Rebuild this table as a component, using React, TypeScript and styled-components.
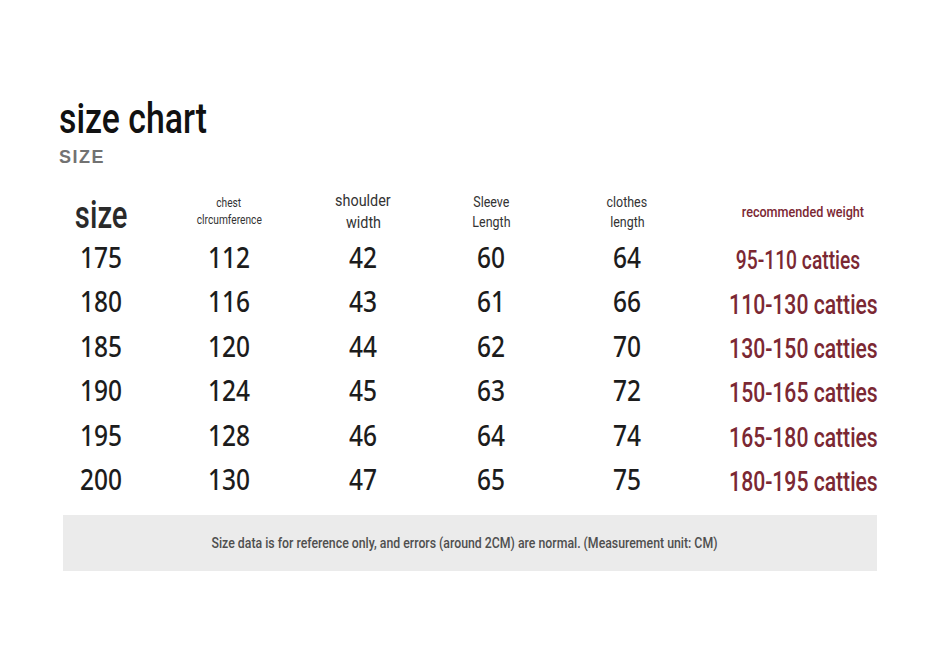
import React from 'react';
import styled, { createGlobalStyle } from 'styled-components';

const Global = createGlobalStyle`
  html, body { margin: 0; padding: 0; background: #ffffff; }
  body { font-family: Roboto, "Noto Sans", sans-serif; }
`;

const Page = styled.div`
  width: 937px;
  height: 656px;
  box-sizing: border-box;
  padding-top: 95px;
  display: flex;
  flex-direction: column;
  background: #ffffff;
`;

const TitleBlock = styled.div`
  margin-left: 59px;
  display: flex;
  flex-direction: column;
`;

const Squeeze = styled.span<{ $x: number; $origin?: string }>`
  display: inline-block;
  white-space: nowrap;
  transform: scaleX(${(p) => p.$x});
  transform-origin: ${(p) => p.$origin || 'center'} center;
`;

const Title = styled.h1`
  margin: 0;
  font-family: Roboto, sans-serif;
  font-size: 42px;
  line-height: 48px;
  font-weight: 500;
  color: #111111;
`;

const Subtitle = styled.div`
  margin-top: 4px;
  font-family: "Liberation Sans", Arial, sans-serif;
  font-size: 18px;
  line-height: 20px;
  font-weight: 700;
  letter-spacing: 1.5px;
  color: #727272;
`;

const Table = styled.div`
  margin-top: 22px;
  margin-left: 37px;
  display: grid;
  grid-template-columns: 128px 128px 140px 116px 156px 196px;
  grid-template-rows: 46px repeat(6, 44.4px);
  align-items: center;
  justify-items: center;
`;

const HeadCell = styled.div<{ $size: number; $lh: number; $pt?: number; $weight?: number; $color?: string }>`
  font-family: Roboto, sans-serif;
  font-size: ${(p) => p.$size}px;
  line-height: ${(p) => p.$lh}px;
  font-weight: ${(p) => p.$weight || 400};
  color: ${(p) => p.$color || '#333333'};
  padding-top: ${(p) => p.$pt || 0}px;
  text-align: center;
`;

const Num = styled.div`
  font-family: "Noto Sans", sans-serif;
  font-size: 28px;
  line-height: 44.4px;
  font-weight: 500;
  color: #1c1c1c;
`;

const Weight = styled.div<{ $size: number; $shift: number }>`
  font-family: Roboto, sans-serif;
  font-size: ${(p) => p.$size}px;
  line-height: 38px;
  padding-top: 6px;
  padding-right: ${(p) => p.$shift}px;
  font-weight: 500;
  color: #7b2833;
`;

const Footer = styled.div`
  margin-top: 14px;
  margin-left: 63px;
  width: 814px;
  height: 56px;
  box-sizing: border-box;
  padding-right: 11px;
  background: #ebebeb;
  display: flex;
  align-items: center;
  justify-content: center;
  font-family: Roboto, sans-serif;
  font-size: 15px;
  font-weight: 500;
  color: #4f4f4f;
`;

const rows: Array<[string, string, string, string, string, string]> = [
  ['175', '112', '42', '60', '64', '95-110 catties'],
  ['180', '116', '43', '61', '66', '110-130 catties'],
  ['185', '120', '44', '62', '70', '130-150 catties'],
  ['190', '124', '45', '63', '72', '150-165 catties'],
  ['195', '128', '46', '64', '74', '165-180 catties'],
  ['200', '130', '47', '65', '75', '180-195 catties'],
];

export default function App() {
  return (
    <Page>
      <Global />
      <TitleBlock>
        <Title>
          <Squeeze $x={0.805} $origin="left">size chart</Squeeze>
        </Title>
        <Subtitle>SIZE</Subtitle>
      </TitleBlock>
      <Table>
        <HeadCell $size={38} $lh={46} $pt={6} $weight={500} $color="#2a2a2a">
          <Squeeze $x={0.77}>size</Squeeze>
        </HeadCell>
        <HeadCell $size={12} $lh={17}>
          <Squeeze $x={0.85}>chest</Squeeze>
          <br />
          <Squeeze $x={0.85}>clrcumference</Squeeze>
        </HeadCell>
        <HeadCell $size={16} $lh={22}>
          <Squeeze $x={0.9}>shoulder</Squeeze>
          <br />
          <Squeeze $x={0.9}>width</Squeeze>
        </HeadCell>
        <HeadCell $size={14} $lh={20}>
          <Squeeze $x={0.89}>Sleeve</Squeeze>
          <br />
          <Squeeze $x={0.89}>Length</Squeeze>
        </HeadCell>
        <HeadCell $size={14} $lh={20}>
          <Squeeze $x={0.89}>clothes</Squeeze>
          <br />
          <Squeeze $x={0.89}>length</Squeeze>
        </HeadCell>
        <HeadCell $size={14} $lh={20} $weight={500} $color="#7b2833">
          <Squeeze $x={0.9}>recommended weight</Squeeze>
        </HeadCell>
        {rows.map((r, idx) => (
          <React.Fragment key={r[0]}>
            {r.slice(0, 5).map((v, i) => (
              <Num key={i}>
                <Squeeze $x={0.875}>{v}</Squeeze>
              </Num>
            ))}
            <Weight $size={idx === 0 ? 26 : 28} $shift={idx === 0 ? 10 : -2}>
              <Squeeze $x={idx === 0 ? 0.74 : 0.755}>{r[5]}</Squeeze>
            </Weight>
          </React.Fragment>
        ))}
      </Table>
      <Footer>
        <Squeeze $x={0.82}>
          Size data is for reference only, and errors (around 2CM) are normal. (Measurement unit: CM)
        </Squeeze>
      </Footer>
    </Page>
  );
}
